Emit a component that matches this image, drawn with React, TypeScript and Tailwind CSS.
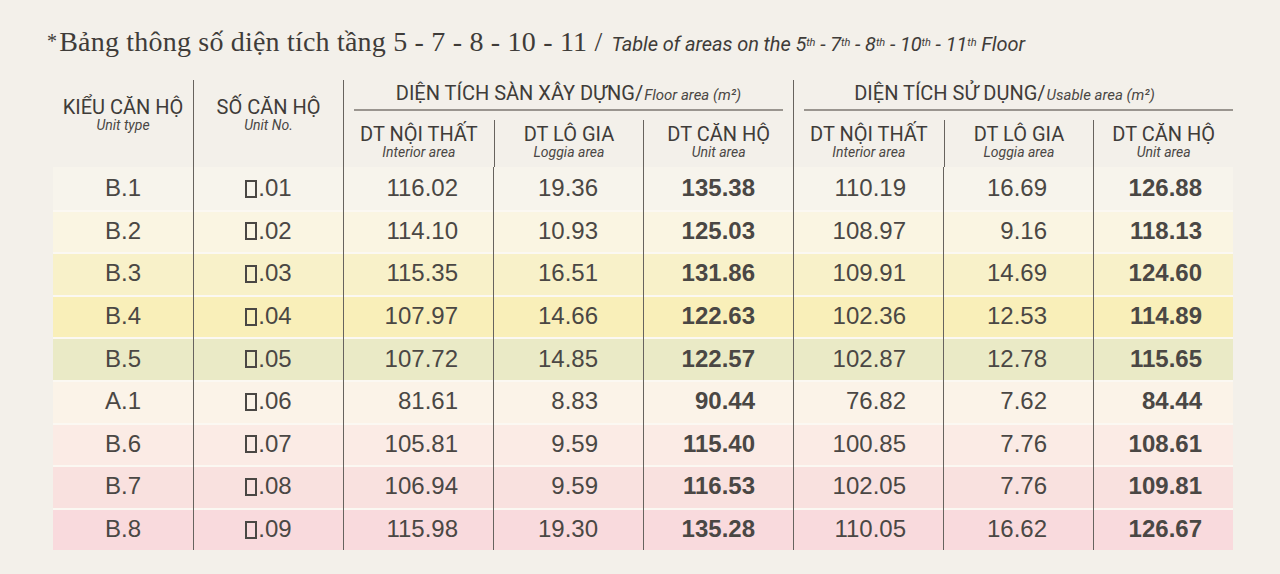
import React from "react";

const rows = [
  { t: "B.1", n: ".01", a: ["116.02", "19.36", "135.38", "110.19", "16.69", "126.88"], bg: "bg-[#f7f4ec]" },
  { t: "B.2", n: ".02", a: ["114.10", "10.93", "125.03", "108.97", "9.16", "118.13"], bg: "bg-[#faf5e2]" },
  { t: "B.3", n: ".03", a: ["115.35", "16.51", "131.86", "109.91", "14.69", "124.60"], bg: "bg-[#f8f1c9]" },
  { t: "B.4", n: ".04", a: ["107.97", "14.66", "122.63", "102.36", "12.53", "114.89"], bg: "bg-[#f9efb9]" },
  { t: "B.5", n: ".05", a: ["107.72", "14.85", "122.57", "102.87", "12.78", "115.65"], bg: "bg-[#eaeac6]" },
  { t: "A.1", n: ".06", a: ["81.61", "8.83", "90.44", "76.82", "7.62", "84.44"], bg: "bg-[#fbf3e8]" },
  { t: "B.6", n: ".07", a: ["105.81", "9.59", "115.40", "100.85", "7.76", "108.61"], bg: "bg-[#fbebe5]" },
  { t: "B.7", n: ".08", a: ["106.94", "9.59", "116.53", "102.05", "7.76", "109.81"], bg: "bg-[#f9e1df]" },
  { t: "B.8", n: ".09", a: ["115.98", "19.30", "135.28", "110.05", "16.62", "126.67"], bg: "bg-[#f9dadd]" },
];

const num = "font-['Liberation_Sans',sans-serif] text-[24px] text-[#4a4744]";
const head = "font-['Roboto',sans-serif] text-[20px] leading-[22px] text-[#3f3c39]";
const sub = "font-['Roboto',sans-serif] italic text-[14px] leading-[15px] text-[#4a4744]";
const line = "border-l border-[#67635e]";

function SubHead({ top, bottom, border, w = "w-[150px]" }: { top: string; bottom: string; border?: boolean; w?: string }) {
  return (
    <div className={`${w} h-full flex flex-col items-center pt-[3px] ${border ? line : ""}`}>
      <div className={head}>{top}</div>
      <div className={sub}>{bottom}</div>
    </div>
  );
}

export default function App() {
  return (
    <div className="w-full h-[574px] bg-[#f3f0ea] relative overflow-hidden">
      <div className="pl-[47px] pt-[25px] flex items-baseline">
        <span className="font-['Liberation_Serif',serif] text-[28px] leading-[34px] text-[#3f3c39] tracking-[0.2px]">
          <span className="text-[20px] relative top-[-3px] mr-[2px]">*</span>Bảng thông số diện tích tầng 5 - 7 - 8 - 10 - 11 /
        </span>
        <span className="ml-[9px] font-['Roboto',sans-serif] italic text-[20px] text-[#3f3c39] tracking-[-0.1px]">
          Table of areas on the 5<sup className="text-[11px]">th</sup> - 7<sup className="text-[11px]">th</sup> - 8<sup className="text-[11px]">th</sup> - 10<sup className="text-[11px]">th</sup> - 11<sup className="text-[11px]">th</sup> Floor
        </span>
      </div>

      <div className="ml-[53px] mt-[19px] w-[1180px]">
        {/* header */}
        <div className="flex h-[87px]">
          <div className="w-[140px] flex flex-col items-center pt-[16px]">
            <div className={head}>KIỂU CĂN HỘ</div>
            <div className={sub}>Unit type</div>
          </div>
          <div className={`w-[150px] ${line} flex flex-col items-center pt-[16px]`}>
            <div className={head}>SỐ CĂN HỘ</div>
            <div className={sub}>Unit No.</div>
          </div>
          <div className={`w-[450px] ${line} flex flex-col`}>
            <div className="h-[40px] flex flex-col">
              <div className="h-[29px] flex items-end justify-center pb-[5px]">
                <span className={head}>DIỆN TÍCH SÀN XÂY DỰNG/</span>
                <span className={`${sub} text-[15px] ml-[1px] mb-[1px]`}>Floor area (m²)</span>
              </div>
              <div className="mx-[10px] h-[2px] bg-[#9a958f]" />
            </div>
            <div className="flex flex-1">
              <SubHead top="DT NỘI THẤT" bottom="Interior area" />
              <SubHead top="DT LÔ GIA" bottom="Loggia area" border />
              <SubHead top="DT CĂN HỘ" bottom="Unit area" border />
            </div>
          </div>
          <div className={`w-[440px] ${line} flex flex-col`}>
            <div className="h-[40px] flex flex-col">
              <div className="h-[29px] flex items-end justify-center pb-[5px] pr-[18px]">
                <span className={head}>DIỆN TÍCH SỬ DỤNG/</span>
                <span className={`${sub} text-[15px] ml-[1px] mb-[1px]`}>Usable area (m²)</span>
              </div>
              <div className="ml-[10px] h-[2px] bg-[#9a958f]" />
            </div>
            <div className="flex flex-1">
              <SubHead top="DT NỘI THẤT" bottom="Interior area" />
              <SubHead top="DT LÔ GIA" bottom="Loggia area" border />
              <SubHead top="DT CĂN HỘ" bottom="Unit area" border w="w-[140px]" />
            </div>
          </div>
        </div>

        {/* rows */}
        {rows.map((r, i) => (
          <div
            key={r.t}
            className={`flex h-[42.6px] items-stretch ${r.bg} ${i > 0 ? "shadow-[inset_0_2px_0_#fbf8f2]" : ""}`}
          >
            <div className={`w-[140px] flex items-center justify-center ${num}`}>{r.t}</div>
            <div className={`w-[150px] ${line} flex items-center justify-center ${num}`}>
              <span className="inline-block w-[12px] h-[18px] border-[2px] border-[#4a4744] mr-[1px] mt-[1px]" aria-hidden="true" />
              {r.n}
            </div>
            <div className={`w-[150px] ${line} flex items-center justify-end pr-[35px] ${num}`}>{r.a[0]}</div>
            <div className={`w-[150px] ${line} flex items-center justify-end pr-[45px] ${num}`}>{r.a[1]}</div>
            <div className={`w-[150px] ${line} flex items-center justify-end pr-[38px] ${num} font-bold text-[#3d3b38]`}>{r.a[2]}</div>
            <div className={`w-[150px] ${line} flex items-center justify-end pr-[37px] ${num}`}>{r.a[3]}</div>
            <div className={`w-[150px] ${line} flex items-center justify-end pr-[46px] ${num}`}>{r.a[4]}</div>
            <div className={`w-[140px] ${line} flex items-center justify-end pr-[31px] ${num} font-bold text-[#3d3b38]`}>{r.a[5]}</div>
          </div>
        ))}
      </div>
    </div>
  );
}
